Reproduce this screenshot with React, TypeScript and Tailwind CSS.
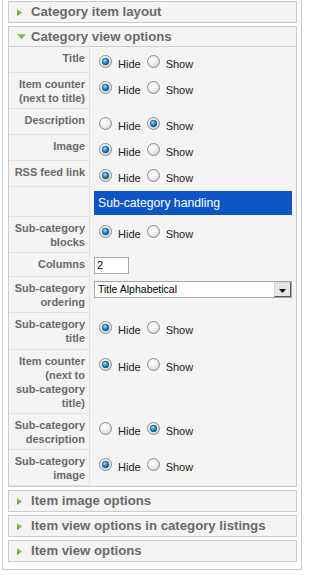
import React from 'react';

type Row =
  | { kind: 'radio'; label: string; value: 'hide' | 'show'; h: string }
  | { kind: 'heading'; text: string; h: string }
  | { kind: 'input'; label: string; value: string; h: string }
  | { kind: 'select'; label: string; value: string; h: string };

const rows: Row[] = [
  { kind: 'radio', label: 'Title', value: 'hide', h: 'h-[26px]' },
  { kind: 'radio', label: 'Item counter (next to title)', value: 'hide', h: 'h-[36px]' },
  { kind: 'radio', label: 'Description', value: 'show', h: 'h-[26px]' },
  { kind: 'radio', label: 'Image', value: 'hide', h: 'h-[26px]' },
  { kind: 'radio', label: 'RSS feed link', value: 'hide', h: 'h-[26px]' },
  { kind: 'heading', text: 'Sub-category handling', h: 'h-[30px]' },
  { kind: 'radio', label: 'Sub-category blocks', value: 'hide', h: 'h-[36px]' },
  { kind: 'input', label: 'Columns', value: '2', h: 'h-[24px]' },
  { kind: 'select', label: 'Sub-category ordering', value: 'Title Alphabetical', h: 'h-[36px]' },
  { kind: 'radio', label: 'Sub-category title', value: 'hide', h: 'h-[37px]' },
  { kind: 'radio', label: 'Item counter (next to sub-category title)', value: 'hide', h: 'h-[64px]' },
  { kind: 'radio', label: 'Sub-category description', value: 'show', h: 'h-[36px]' },
  { kind: 'radio', label: 'Sub-category image', value: 'hide', h: 'h-[36px]' },
];

// keep hyphenated words such as "sub-category" on one line
const Label = ({ text }: { text: string }) => (
  <>
    {text.split(' ').map((word, i) => (
      <React.Fragment key={i}>
        {i > 0 && ' '}
        <span className="whitespace-nowrap">{word}</span>
      </React.Fragment>
    ))}
  </>
);

const Radio = ({ checked }: { checked: boolean }) => (
  <svg width="13" height="13" viewBox="0 0 13 13" className="shrink-0">
    <defs>
      <radialGradient id="radioFace" cx="0.4" cy="0.35" r="0.75">
        <stop offset="0" stopColor="#ffffff" />
        <stop offset="0.55" stopColor="#ececec" />
        <stop offset="1" stopColor="#c9c9c9" />
      </radialGradient>
      <radialGradient id="radioDot" cx="0.4" cy="0.35" r="0.75">
        <stop offset="0" stopColor="#9fdcff" />
        <stop offset="0.45" stopColor="#2a8fd0" />
        <stop offset="1" stopColor="#0b3f69" />
      </radialGradient>
    </defs>
    <circle cx="6.5" cy="6.5" r="6" fill="url(#radioFace)" stroke="#8d8d8d" strokeWidth="1" />
    {checked && <circle cx="6.5" cy="6.5" r="3.4" fill="url(#radioDot)" stroke="#24587c" strokeWidth="0.6" />}
  </svg>
);

const Arrow = ({ open }: { open: boolean }) => (
  <svg width={open ? 9 : 5} height={open ? 5 : 7} viewBox={open ? '0 0 9 5' : '0 0 5 7'}>
    <defs>
      <linearGradient id="arrowGreen" x1="0" y1="0" x2="0" y2="1">
        <stop offset="0" stopColor="#9ccf5c" />
        <stop offset="1" stopColor="#5a9a2c" />
      </linearGradient>
    </defs>
    <polygon points={open ? '0,0 9,0 4.5,5' : '0,0 5,3.5 0,7'} fill="url(#arrowGreen)" />
  </svg>
);

const PanelHeader = ({ title, open }: { title: string; open?: boolean }) => (
  <div className={`flex h-[20px] items-center ${open ? 'border-b border-[#cccccc]' : ''}`}>
    <div className="flex w-[22px] shrink-0 items-center pl-[8px]">
      <Arrow open={!!open} />
    </div>
    <span className="text-[13.2px] font-bold leading-[20px] text-[#6a6a6a]">{title}</span>
  </div>
);

const Panel = ({ title }: { title: string }) => (
  <div className="border border-[#cccccc] bg-[#f4f4f4]">
    <PanelHeader title={title} />
  </div>
);

const RadioPair = ({ value }: { value: 'hide' | 'show' }) => (
  <div className="flex items-start pt-[8px] text-[11px] leading-[14px] text-[#222222]">
    <span className="ml-[5px] mr-[6px]">
      <Radio checked={value === 'hide'} />
    </span>
    <span className="mt-[2px]">Hide</span>
    <span className="ml-[6px] mr-[6px]">
      <Radio checked={value === 'show'} />
    </span>
    <span className="mt-[2px]">Show</span>
  </div>
);

const ParamRow = ({ row }: { row: Row }) => {
  const label = row.kind === 'heading' ? '' : row.label;
  return (
    <div className={`flex ${row.h}`}>
      <div className="w-[81px] shrink-0 border-r border-b border-[#e2e2e2] pl-[4px] pr-[4px] pt-[4px] text-right text-[11px] font-bold leading-[14px] text-[#6a6a6a]">
        <Label text={label} />
      </div>
      <div className="min-w-0 flex-1 pl-[4px] pr-[4px]">
        {row.kind === 'radio' && <RadioPair value={row.value} />}
        {row.kind === 'heading' && (
          <div className="mt-[4px] flex h-[24px] items-center bg-[#0b55c4] pl-[4px] text-[12.2px] text-white">
            {row.text}
          </div>
        )}
        {row.kind === 'input' && (
          <div className="mt-[4px] flex h-[17px] w-[35px] items-center border border-[#a8a8a8] bg-white pl-[2px] text-[11px] text-black">
            {row.value}
          </div>
        )}
        {row.kind === 'select' && (
          <div className="mt-[4px] flex h-[17px] items-center border border-[#a5a5a5] bg-white pl-[3px] text-[10.5px] text-black">
            <span className="flex-1">{row.value}</span>
            <div className="flex h-[15px] w-[17px] items-center justify-center border border-t-[#d8d8d8] border-l-[#d8d8d8] border-r-[#5a5a5a] border-b-[#5a5a5a] bg-[#e6e6e6]">
              <svg width="7" height="4" viewBox="0 0 7 4" className="mt-[3px]">
                <polygon points="0,0 7,0 3.5,4" fill="#111111" />
              </svg>
            </div>
          </div>
        )}
      </div>
    </div>
  );
};

export default function App() {
  return (
    <div className="h-[580px] w-[309px] bg-white font-['Liberation_Sans',Arial,sans-serif]">
      <div className="ml-[2px] flex w-[300px] flex-col gap-[3px] border-x border-b border-[#cccccc] bg-white pb-[7px] pl-[5px] pr-[4px] pt-[1px]">
        <Panel title="Category item layout" />
        <div className="border border-[#cccccc] bg-[#f4f4f4]">
          <PanelHeader title="Category view options" open />
          {rows.map((row, i) => (
            <ParamRow key={i} row={row} />
          ))}
        </div>
        <Panel title="Item image options" />
        <Panel title="Item view options in category listings" />
        <Panel title="Item view options" />
      </div>
    </div>
  );
}
